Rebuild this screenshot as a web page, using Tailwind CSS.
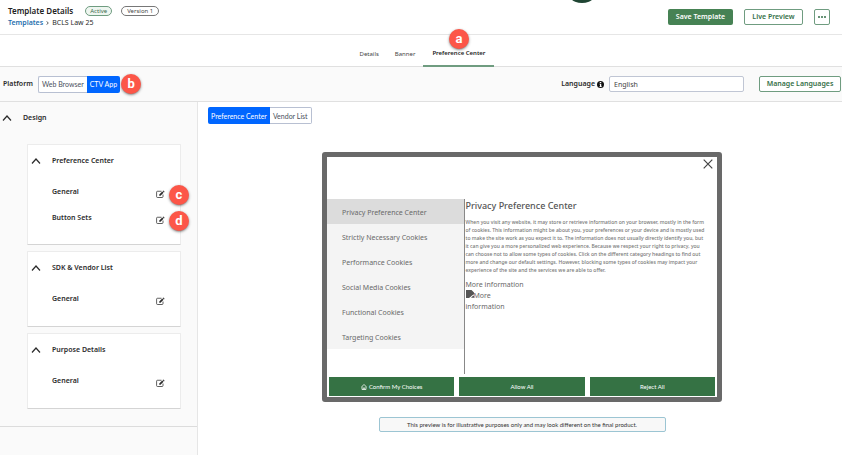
<!DOCTYPE html>
<html lang="en">
<head>
<meta charset="utf-8">
<meta name="viewport" content="width=device-width, initial-scale=1">
<title>Template Details</title>
<script src="https://cdn.jsdelivr.net/npm/@tailwindcss/browser@4"></script>
</head>
<body class="flex min-h-screen flex-col bg-white font-['Noto_Sans',sans-serif] text-[7px] leading-[10px] text-[#2b2b2b]">
<svg class="hidden" aria-hidden="true">
  <symbol id="chevron" viewBox="0 0 10 8"><path d="M1 6.500 5 2l4 4.500" fill="none" stroke="currentColor" stroke-width="1.200"/></symbol>
  <symbol id="edit" viewBox="0 0 18 16"><path d="M14 9v4.200a1.800 1.800 0 0 1-1.800 1.800H3a1.800 1.800 0 0 1-1.800-1.800V4.300A1.800 1.800 0 0 1 3 2.500h8" fill="none" stroke="currentColor" stroke-width="1.500"/><path d="M6.500 11.500V9l6-6 2.500 2.500-6 6zM13.300 2.200l.9-.9q.5-.5 1.100 0l1.500 1.500q.5.500 0 1.100l-.9.900z" fill="currentColor"/></symbol>
</svg>

<header class="relative flex items-start justify-between overflow-hidden border-b border-[#e6e6e6] pt-[5px] pr-3 pb-[5px] pl-2">
  <div>
    <div class="flex h-3 items-center">
      <h1 class="text-[8px] font-semibold text-[#222]">Template Details</h1>
      <span class="ml-3 flex h-[10px] items-center rounded-full border border-[#6f9c80] bg-[#eef6f0] px-1 text-[6px] text-[#3c6b4c]">Active</span>
      <span class="ml-[9px] flex h-[10px] items-center rounded-full border border-[#777] px-[5px] text-[6px] text-[#444]">Version 1</span>
    </div>
    <nav class="flex h-3 items-center gap-[3px]" aria-label="Breadcrumb">
      <a href="#" class="font-semibold text-[#1f6fae]">Templates</a><svg class="h-1 w-[3px]" viewBox="0 0 3 4" aria-hidden="true"><path d="M.5.300 2.300 2 .5 3.700" fill="none" stroke="#333" stroke-width=".8"/></svg><span>BCLS Law 25</span>
    </nav>
  </div>
  <div class="absolute -top-[33px] left-[564px] size-9 rounded-full bg-[#1f4533]"></div>
  <div class="flex gap-[11px] pt-1 font-semibold text-[#356f48]">
    <button class="h-4 w-[65px] rounded-[2px] bg-[#468254] text-white">Save Template</button>
    <button class="h-4 w-[59px] rounded-[2px] border border-[#6f9c80]">Live Preview</button>
    <button class="flex size-4 items-center justify-center gap-px rounded-[2px] border border-[#6f9c80]" aria-label="More actions"><i class="size-[2px] rounded-full bg-[#356f48]"></i><i class="size-[2px] rounded-full bg-[#356f48]"></i><i class="size-[2px] rounded-full bg-[#356f48]"></i></button>
  </div>
</header>

<nav class="flex h-8 justify-center border-b border-[#e0e0e0] pl-1 text-[6px] text-[#444]" aria-label="Template sections">
  <a href="#" class="flex items-center px-2 pt-[6px]">Details</a>
  <a href="#" class="flex items-center px-2 pt-[6px]">Banner</a>
  <a href="#" class="relative -mb-px flex items-center border-b-2 border-[#6f9c80] px-[9px] pt-[6px] font-semibold text-[#222]">Preference Center
    <span class="absolute inset-x-0 -top-[6px] mx-auto flex size-5 items-center justify-center rounded-full bg-[#fc5648] font-['Roboto',sans-serif] text-[13px] font-bold text-white shadow-sm shadow-black/40">a</span>
  </a>
</nav>

<section class="flex h-[35px] items-center justify-between border-b border-[#e0e0e0] bg-[#fafafa] pr-px pl-[3px]">
  <div class="relative flex items-center gap-[5px]">
    <span class="font-semibold">Platform</span>
    <div class="flex h-[17px] font-['Lato',sans-serif]">
      <button class="rounded-l-[2px] border border-r-0 border-[#b8c0d2] bg-white px-[3px] text-[#4a4f5c]">Web Browser</button>
      <button class="rounded-r-[2px] bg-[#0066ff] px-[3px] text-white">CTV App</button>
    </div>
    <span class="absolute left-full ml-px flex size-5 items-center justify-center rounded-full bg-[#fc5648] font-['Roboto',sans-serif] text-[13px] font-bold text-white shadow-sm shadow-black/40">b</span>
  </div>
  <div class="flex items-center">
    <label for="language" class="font-semibold">Language</label>
    <svg class="ml-[2px] size-[7px]" viewBox="0 0 14 14" aria-hidden="true"><circle cx="7" cy="7" r="7" fill="#111"/><path d="M5.500 2h3v2.200h-3zM5 5.500h3.500v4.800h1v1.700H5v-1.700h1V7.200H5z" fill="#fff"/></svg>
    <input id="language" type="text" value="English" class="ml-[5px] h-4 w-[135px] rounded-[2px] border border-[#c0c6d4] bg-white px-1 text-[#444]">
    <button class="ml-[15px] h-4 w-[82px] rounded-[2px] border border-[#6f9c80] bg-white font-semibold text-[#356f48]">Manage Languages</button>
  </div>
</section>

<div class="flex grow">
  <aside class="w-[198px] shrink-0 border-r border-[#e6e6e6] bg-[#fafafa]">
    <div class="border-b border-[#dcdcdc] pb-[17px]">
      <h2 class="flex h-8 items-center pl-[2px] font-semibold"><svg class="mr-[11px] h-2 w-[10px]"><use href="#chevron"/></svg>Design</h2>
      <div class="mt-[10px] mr-4 ml-[27px] flex flex-col gap-[6px]">
        <section class="rounded-[1px] border border-[#ececec] border-b-[#d4d4d4] bg-white pb-[13px]">
          <h3 class="flex h-[31px] items-center pl-[3px] font-semibold"><svg class="mr-[11px] h-2 w-[10px]"><use href="#chevron"/></svg>Preference Center</h3>
          <div class="relative mt-[3px] flex h-[26px] items-center justify-between pr-[15px] pl-6 font-semibold"><span>General</span><button aria-label="Edit General" class="pt-1"><svg class="h-2 w-[9px]"><use href="#edit"/></svg></button>
            <span class="absolute -right-[9px] mt-[5px] flex size-5 items-center justify-center rounded-full bg-[#fc5648] font-['Roboto',sans-serif] text-[13px] font-bold text-white shadow-sm shadow-black/40">c</span></div>
          <div class="relative flex h-[26px] items-center justify-between pr-[15px] pl-6 font-semibold"><span>Button Sets</span><button aria-label="Edit Button Sets" class="pt-1"><svg class="h-2 w-[9px]"><use href="#edit"/></svg></button>
            <span class="absolute -right-[9px] mt-[5px] flex size-5 items-center justify-center rounded-full bg-[#fc5648] font-['Roboto',sans-serif] text-[13px] font-bold text-white shadow-sm shadow-black/40">d</span></div>
        </section>
        <section class="rounded-[1px] border border-[#ececec] border-b-[#d4d4d4] bg-white pb-[14px]">
          <h3 class="flex h-[31px] items-center pl-[3px] font-semibold"><svg class="mr-[11px] h-2 w-[10px]"><use href="#chevron"/></svg>SDK &amp; Vendor List</h3>
          <div class="mt-[3px] flex h-[26px] items-center justify-between pr-[15px] pl-6 font-semibold"><span>General</span><button aria-label="Edit SDK General" class="pt-1"><svg class="h-2 w-[9px]"><use href="#edit"/></svg></button></div>
        </section>
        <section class="rounded-[1px] border border-[#ececec] border-b-[#d4d4d4] bg-white pb-[14px]">
          <h3 class="flex h-[31px] items-center pl-[3px] font-semibold"><svg class="mr-[11px] h-2 w-[10px]"><use href="#chevron"/></svg>Purpose Details</h3>
          <div class="mt-[3px] flex h-[26px] items-center justify-between pr-[15px] pl-6 font-semibold"><span>General</span><button aria-label="Edit Purpose General" class="pt-1"><svg class="h-2 w-[9px]"><use href="#edit"/></svg></button></div>
        </section>
      </div>
    </div>
  </aside>

  <main class="grow pt-[5px] pl-1">
    <div class="ml-[6px] flex h-[17px] font-['Lato',sans-serif]">
      <button class="rounded-l-[2px] bg-[#0066ff] px-[3px] text-white">Preference Center</button>
      <button class="rounded-r-[2px] border border-l-0 border-[#b8c0d2] px-[3px] text-[#4a4f5c]">Vendor List</button>
    </div>

    <section class="mx-auto mt-7 flex w-full max-w-[400px] flex-col rounded-[3px] border-5 border-[#696969] bg-white text-[#696969]">
      <div class="flex h-[42px] justify-end pt-[2px] pr-1">
        <button class="size-[10px]" aria-label="Close"><svg viewBox="0 0 10 10"><path d="m.7.700 8.600 8.600m0-8.600L.7 9.300" stroke="#444" stroke-width="1.200"/></svg></button>
      </div>
      <div class="flex h-[175px]">
        <nav class="w-[35%] shrink-0" aria-label="Cookie categories">
          <a href="#" class="flex h-[25px] items-center bg-[#dcdcdc] pt-[2px] pl-[15px]">Privacy Preference Center</a>
          <a href="#" class="flex h-[25px] items-center bg-[#f4f4f4] pt-[2px] pl-[15px]">Strictly Necessary Cookies</a>
          <a href="#" class="flex h-[25px] items-center bg-[#f4f4f4] pt-[2px] pl-[15px]">Performance Cookies</a>
          <a href="#" class="flex h-[25px] items-center bg-[#f4f4f4] pt-[2px] pl-[15px]">Social Media Cookies</a>
          <a href="#" class="flex h-[25px] items-center bg-[#f4f4f4] pt-[2px] pl-[15px]">Functional Cookies</a>
          <a href="#" class="flex h-[25px] items-center bg-[#f4f4f4] pt-[2px] pl-[15px]">Targeting Cookies</a>
        </nav>
        <div class="grow border-l border-[#888] pl-px">
          <h2 class="h-[19px] pt-[2px] text-[9px] font-medium text-[#555]">Privacy Preference Center</h2>
          <p class="text-[5px] leading-[8px] font-medium text-[#777]">When you visit any website, it may store or retrieve information on your browser, mostly in the form<br>of cookies. This information might be about you, your preferences or your device and is mostly used<br>to make the site work as you expect it to. The information does not usually directly identify you, but<br>it can give you a more personalized web experience. Because we respect your right to privacy, you<br>can choose not to allow some types of cookies. Click on the different category headings to find out<br>more and change our default settings. However, blocking some types of cookies may impact your<br>experience of the site and the services we are able to offer.</p>
          <a href="#" class="mt-[6px] block">More information</a>
          <a href="#" class="block leading-[11px]"><svg class="inline-block h-2 w-2 align-baseline" viewBox="0 0 8 8" aria-hidden="true"><path d="M0 0h5.500L8 2.500v1.800L6 5.500 4.300 7 3 8H0z" fill="#555"/><path d="m5 7.800 1.500-1.600L8 5.500v2.300z" fill="#555"/></svg>More<br>information</a>
        </div>
      </div>
      <div class="grid grid-cols-3 gap-[5px] px-[2px] pt-[3px] pb-px font-['Lato',sans-serif] text-[6px] text-white">
        <button class="flex h-[19px] items-center justify-center gap-[2px] bg-[#357244]"><svg class="size-[6px]" viewBox="0 0 12 12" aria-hidden="true"><path d="M1 5.800 6 1l5 4.800M2 5v6h8V5M4.600 11V8q1.400-2 2.800 0v3" fill="none" stroke="#fff" stroke-width="1.500"/></svg>Confirm My Choices</button>
        <button class="h-[19px] bg-[#357244]">Allow All</button>
        <button class="h-[19px] bg-[#357244]">Reject All</button>
      </div>
    </section>
    <p class="mx-auto mt-[15px] flex h-[15px] w-full max-w-[287px] items-center justify-center rounded-[2px] border border-[#9cc5d3] bg-[#f8f8f8] font-['Lato',sans-serif] text-[6px] text-[#333]">This preview is for illustrative purposes only and may look different on the final product.</p>
  </main>
</div>
</body>
</html>
